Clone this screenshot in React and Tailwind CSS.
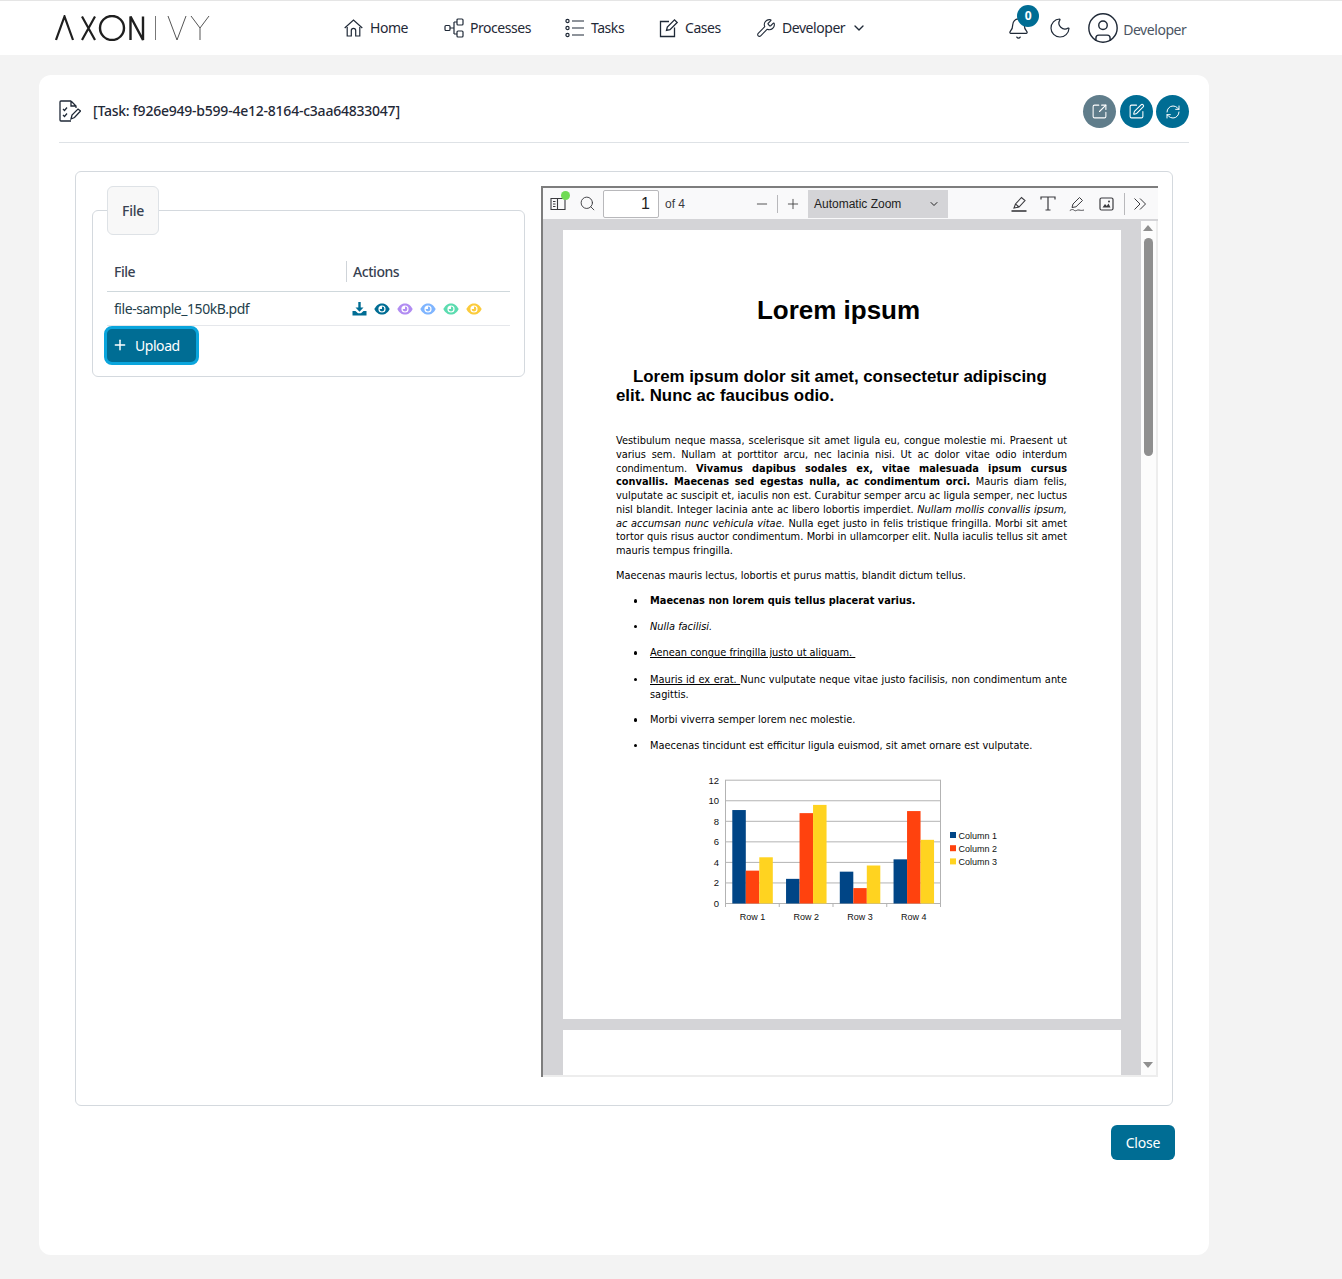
import React from "react";
import { Wrench, ChevronDown, Bell, Moon, CircleUser, SquareArrowOutUpRight, SquarePen, RefreshCw, Plus, Search, Minus } from "lucide-react";

const Logo = () => (
  <svg width="156" height="26" viewBox="0 0 156 26" className="block" fill="none" stroke="#1f1f1f">
    <path d="M1 25 L9.5 1.5 L18 25" strokeWidth="2.2" />
    <path d="M27 1.5 L40 25 M40 1.5 L27 25" strokeWidth="2.2" />
    <ellipse cx="57" cy="13" rx="12" ry="12" strokeWidth="2.4" />
    <path d="M75.5 25 V1.5 L88 25 V1.5" strokeWidth="2.4" />
    <path d="M100.5 1 V25" strokeWidth="1" stroke="#777" />
    <path d="M113 1 L122 25 L131 1" strokeWidth="1" stroke="#555" />
    <path d="M136 1 L145 13 L154 1 M145 13 V25" strokeWidth="1" stroke="#555" />
  </svg>
);

const HomeIcon = () => (
  <svg width="20" height="18" viewBox="0 0 20 18" fill="none" stroke="#1f2937" strokeWidth="1.2">
    <path d="M0.7 9 L9.5 1 L18.3 9" />
    <path d="M3.2 8 V17 H7.3 V11.5 A2.2 2.2 0 0 1 11.7 11.5 V17 H15.8 V8" />
  </svg>
);

const ProcessIcon = () => (
  <svg width="20" height="20" viewBox="0 0 20 20" fill="none" stroke="#1f2937" strokeWidth="1.2">
    <rect x="1" y="7.5" width="5" height="5" rx="1" />
    <rect x="13" y="1" width="6" height="6" rx="1" />
    <rect x="13" y="13" width="6" height="6" rx="1" />
    <path d="M6 10 H10 M10 4 V16 M10 4 H13 M10 16 H13" />
  </svg>
);

const TasksIcon = () => (
  <svg width="20" height="20" viewBox="0 0 20 20" fill="none" stroke="#1f2937" strokeWidth="1.2">
    <circle cx="2.5" cy="3" r="1.6" />
    <circle cx="2.5" cy="10" r="1.6" />
    <circle cx="2.5" cy="17" r="1.6" />
    <path d="M7 3 H19 M7 10 H19 M7 17 H19" />
  </svg>
);

const CasesIcon = () => (
  <svg width="20" height="20" viewBox="0 0 20 20" fill="none" stroke="#1f2937" strokeWidth="1.3">
    <path d="M10 3.5 H1.5 V18.5 H15.5 V9.5" />
    <path d="M7.5 12.5 L8.3 9 L15.5 1.8 L18.2 4.5 L11 11.7 Z" />
  </svg>
);

const TaskDocIcon = () => (
  <svg width="22" height="22" viewBox="0 0 22 22" fill="none" stroke="#1f2937" strokeWidth="1.3">
    <path d="M12 1 H2 a1 1 0 0 0 -1 1 V20 a1 1 0 0 0 1 1 H12 M12 1 L17 6 V8 M12 1 V6 H17" />
    <path d="M4 9 L5.5 10.5 L8 7.5 M4 15 L5.5 16.5 L8 13.5" />
    <path d="M12 19 L13 15 L19 9 L21.5 11 L15.5 17.5 Z" />
  </svg>
);

const SidebarIcon = () => (
  <svg width="16" height="14" viewBox="0 0 16 14" fill="none" stroke="#3a3a3e" strokeWidth="1.1">
    <path d="M1 1.5 H15 V12.5 H1 Z M7.5 1.5 V12.5 M3 4.5 H5.5 M3 7 H5.5 M3 9.5 H5.5" />
  </svg>
);

const HighlightIcon = () => (
  <svg width="16" height="16" viewBox="0 0 16 16" fill="none" stroke="#3a3a3e" strokeWidth="1.1">
    <path d="M3 12 L4.5 8 L10.5 1.5 L14 4.5 L8 11 Z M4.5 8 L8 11" />
    <path d="M0.5 15 H15.5" strokeWidth="1.6" />
  </svg>
);

const TextIcon = () => (
  <svg width="16" height="15" viewBox="0 0 16 15" fill="none" stroke="#3a3a3e" strokeWidth="1.2">
    <path d="M1 3.5 V1 H15 V3.5 M8 1 V14 M5.5 14 H10.5" />
  </svg>
);

const SignIcon = () => (
  <svg width="16" height="16" viewBox="0 0 16 16" fill="none" stroke="#3a3a3e" strokeWidth="1">
    <path d="M3 11.5 L4 8 L10.5 1.5 L13.5 4.5 L7 10.8 Z" />
    <path d="M0.8 14.5 C3 13 4.5 13.5 5.5 14.5 C7 15.5 8 13.5 10 14 C12 14.5 13 14.5 15 14" strokeWidth="0.9" />
  </svg>
);

const ImageIcon = () => (
  <svg width="15" height="14" viewBox="0 0 15 14" fill="none" stroke="#3a3a3e" strokeWidth="1.2">
    <rect x="1" y="1" width="13" height="12" rx="1.5" />
    <path d="M3.5 10.5 L6 7 L7.8 9 L9.5 6.5 L11.5 10.5 Z" fill="#3a3a3e" stroke="none" />
    <circle cx="10" cy="4.5" r="1" fill="#3a3a3e" stroke="none" />
  </svg>
);

const DoubleChevron = () => (
  <svg width="14" height="14" viewBox="0 0 14 14" fill="none" stroke="#3a3a3e" strokeWidth="1">
    <path d="M1.5 1.5 L7 7 L1.5 12.5 M7 1.5 L12.5 7 L7 12.5" />
  </svg>
);

const Eye = ({ color }) => (
  <svg width="16" height="12" viewBox="0 0 16 12">
    <path d="M0.3 6 C2.5 1.8 5 0.4 8 0.4 C11 0.4 13.5 1.8 15.7 6 C13.5 10.2 11 11.6 8 11.6 C5 11.6 2.5 10.2 0.3 6 Z" fill={color} />
    <circle cx="8" cy="6" r="3.6" fill="#fff" />
    <path d="M8 3.6 A2.4 2.4 0 1 1 5.6 6 L8 6 Z" fill={color} />
  </svg>
);

const DownloadIcon = () => (
  <svg width="15" height="14" viewBox="0 0 15 14" fill="#006d94">
    <path d="M6.3 0 H8.7 V5.5 H11.5 L7.5 9.8 L3.5 5.5 H6.3 Z" />
    <path d="M0.5 9 H3.5 L6 11.2 H9 L11.5 9 H14.5 V13.5 H0.5 Z" />
  </svg>
);

const NavItem = ({ icon, label, className = "" }) => (
  <div className={`flex items-center gap-[6px] text-[14px] tracking-[-0.45px] text-[#1f2937] ${className}`}>
    {icon}
    <span className="mb-[1px]">{label}</span>
  </div>
);

const CircleButton = ({ children, className = "" }) => (
  <button className={`flex h-[33px] w-[33px] items-center justify-center rounded-full text-white ${className}`}>
    {children}
  </button>
);

const FileTable = () => (
  <div className="relative ml-[16px] mt-[24px] h-[167px] w-[433px] rounded-md border border-[#d4d9de]">
    <div className="absolute left-[14px] top-[-25px] flex h-[49px] w-[52px] items-center justify-center rounded-md border border-[#dee2e6] bg-[#f8f8f8] text-[14px] font-medium tracking-[-0.3px] text-[#374151]">
      File
    </div>
    <div className="ml-[14px] mt-[40px] w-[403px] text-[14px] tracking-[-0.45px] text-[#374151]">
      <div className="flex h-[41px] items-center border-b border-[#cfd8dc] font-medium">
        <div className="w-[239px] pl-[7px]">File</div>
        <div className="flex h-[21px] items-center border-l border-[#cfd4d9] pl-[6px]">Actions</div>
      </div>
      <div className="flex h-[34px] items-center border-b border-[#e5e7eb]">
        <div className="w-[240px] pl-[7px] text-[#1f3f4c]">file-sample_150kB.pdf</div>
        <div className="flex items-center gap-[7px] pl-[5px]">
          <DownloadIcon />
          <Eye color="#006d94" />
          <Eye color="#b18cf2" />
          <Eye color="#7fb5ff" />
          <Eye color="#5cdcb0" />
          <Eye color="#fbcb3c" />
        </div>
      </div>
      <button className="ml-[-3px] flex h-[39px] w-[95px] items-center gap-[7px] rounded-lg border-[3px] border-[#0aa5dc] bg-[#006d94] pb-[1px] pl-[5px] text-white">
        <Plus size={16} strokeWidth={2.2} />
        <span>Upload</span>
      </button>
    </div>
  </div>
);

const PdfToolbar = () => (
  <div className="flex h-[33px] items-center border-b-2 border-[#d4d4d7] bg-[#f9f9fa] text-[#3a3a3e]">
    <div className="relative ml-[7px] w-[17px]">
      <SidebarIcon />
      <div className="absolute right-[-3px] top-[-6px] h-[9px] w-[9px] rounded-full bg-[#70db55]" />
    </div>
    <Search size={17} strokeWidth={1.3} className="ml-[12px]" />
    <div className="ml-[7px] flex h-[28px] w-[56px] items-center justify-end rounded-[2px] border border-[#b8b8bb] bg-white pr-[8px] text-[16px] text-[#222] [font-family:'Liberation_Sans',sans-serif]">
      1
    </div>
    <span className="ml-[6px] w-[89px] text-[12px] [font-family:'Liberation_Sans',sans-serif]">of 4</span>
    <Minus size={16} strokeWidth={1.3} />
    <div className="mx-[7px] h-[18px] w-px bg-[#b8b8bb]" />
    <Plus size={16} strokeWidth={1.3} />
    <div className="ml-[7px] flex h-[28px] w-[140px] items-center justify-between bg-[#d4d4d7] pl-[6px] pr-[8px] text-[12px] text-[#222] [font-family:'Liberation_Sans',sans-serif]">
      <span>Automatic Zoom</span>
      <ChevronDown size={12} />
    </div>
    <div className="ml-[63px] flex items-center gap-[13px]">
      <HighlightIcon />
      <TextIcon />
      <SignIcon />
      <div className="ml-[1px]"><ImageIcon /></div>
    </div>
    <div className="ml-[10px] h-[22px] w-px bg-[#b8b8bb]" />
    <div className="ml-[8px]"><DoubleChevron /></div>
  </div>
);

const chartData = [
  [9.1, 3.2, 4.5],
  [2.4, 8.8, 9.6],
  [3.1, 1.5, 3.7],
  [4.3, 9, 6.2],
];
const chartColors = ["#004586", "#ff420e", "#ffd320"];

const Chart = () => (
  <svg width="310" height="160" viewBox="0 0 310 160" className="ml-[76px] mt-[20px] block">
    {[0, 1, 2, 3, 4, 5, 6].map((i) => (
      <g key={i}>
        <line x1="33" x2="249" y1={131.5 - i * 20.55} y2={131.5 - i * 20.55} stroke="#b3b3b3" strokeWidth="1" />
        <text x="27" y={135 - i * 20.55} textAnchor="end" fontSize="9.5" fill="#111" fontFamily="Liberation Sans">{i * 2}</text>
      </g>
    ))}
    <line x1="33.5" x2="33.5" y1="8" y2="135" stroke="#b3b3b3" />
    <line x1="248.5" x2="248.5" y1="8" y2="135" stroke="#b3b3b3" />
    {chartData.map((row, r) => (
      <g key={r}>
        {row.map((v, c) => (
          <rect key={c} x={40.3 + r * 53.75 + c * 13.5} y={131.5 - v * 10.27} width="13.5" height={v * 10.27} fill={chartColors[c]} />
        ))}
        <line x1={33.5 + r * 53.75} x2={33.5 + r * 53.75} y1="131" y2="135" stroke="#b3b3b3" />
        <text x={60.5 + r * 53.75} y="148" textAnchor="middle" fontSize="9" fill="#111" fontFamily="Liberation Sans">Row {r + 1}</text>
      </g>
    ))}
    {chartColors.map((color, i) => (
      <g key={color}>
        <rect x="258" y={60 + i * 13.2} width="6" height="6" fill={color} />
        <text x="266.5" y={66.5 + i * 13.2} fontSize="9" fill="#111" fontFamily="Liberation Sans">Column {i + 1}</text>
      </g>
    ))}
  </svg>
);

const paragraph = [
  <>Vestibulum neque massa, scelerisque sit amet ligula eu, congue molestie mi. Praesent ut</>,
  <>varius sem. Nullam at porttitor arcu, nec lacinia nisi. Ut ac dolor vitae odio interdum</>,
  <>condimentum. <b>Vivamus dapibus sodales ex, vitae malesuada ipsum cursus</b></>,
  <><b>convallis. Maecenas sed egestas nulla, ac condimentum orci.</b> Mauris diam felis,</>,
  <>vulputate ac suscipit et, iaculis non est. Curabitur semper arcu ac ligula semper, nec luctus</>,
  <>nisl blandit. Integer lacinia ante ac libero lobortis imperdiet. <i>Nullam mollis convallis ipsum,</i></>,
  <><i>ac accumsan nunc vehicula vitae.</i> Nulla eget justo in felis tristique fringilla. Morbi sit amet</>,
  <>tortor quis risus auctor condimentum. Morbi in ullamcorper elit. Nulla iaculis tellus sit amet</>,
];

const Bullet = ({ children, className = "" }) => (
  <li className={`relative pl-[34px] ${className}`}>
    <span className="absolute left-[17.5px] top-[5px] h-[3.5px] w-[3.5px] rounded-full bg-black" />
    {children}
  </li>
);

const PdfPage = () => (
  <div className="h-[789px] w-[558px] shrink-0 bg-white px-[53.5px] pt-[64px] text-[9.82px] leading-[13.75px] text-black [font-family:'DejaVu_Sans',sans-serif]">
    <h1 className="pr-[6px] text-center text-[26px] font-bold leading-[32px] [font-family:'Liberation_Sans',sans-serif]">Lorem ipsum</h1>
    <h2 className="mt-[41px] text-[16.85px] font-bold leading-[19px] [font-family:'Liberation_Sans',sans-serif]">
      <span className="block pl-[17px]">Lorem ipsum dolor sit amet, consectetur adipiscing</span>
      <span className="block">elit. Nunc ac faucibus odio.</span>
    </h2>
    <div className="mt-[29px] w-[451px]">
      {paragraph.map((line, i) => (
        <div key={i} className="whitespace-nowrap text-justify [text-align-last:justify]">{line}</div>
      ))}
      <div>mauris tempus fringilla.</div>
    </div>
    <p className="mt-[11px]">Maecenas mauris lectus, lobortis et purus mattis, blandit dictum tellus.</p>
    <ul className="mt-[11.5px] w-[451px]">
      <Bullet><b>Maecenas non lorem quis tellus placerat varius.</b></Bullet>
      <Bullet className="mt-[12px]"><i>Nulla facilisi.</i></Bullet>
      <Bullet className="mt-[12.5px]"><u>Aenean congue fringilla justo ut aliquam.&nbsp;</u></Bullet>
      <Bullet className="mt-[13px]">
        <div className="whitespace-nowrap [text-align-last:justify]"><u>Mauris id ex erat. </u>Nunc vulputate neque vitae justo facilisis, non condimentum ante</div>
        <div className="mt-[1px]">sagittis.</div>
      </Bullet>
      <Bullet className="mt-[12px]">Morbi viverra semper lorem nec molestie.</Bullet>
      <Bullet className="mt-[11.5px]">Maecenas tincidunt est efficitur ligula euismod, sit amet ornare est vulputate.</Bullet>
    </ul>
    <Chart />
  </div>
);

const PdfViewer = () => (
  <div className="flex h-[891px] w-[617px] flex-col overflow-hidden border-l-2 border-t-2 border-[#7d7d7d]">
    <PdfToolbar />
    <div className="flex min-h-0 flex-1">
      <div className="flex w-[598px] flex-col items-center gap-[11px] overflow-hidden bg-[#d4d4d7] pt-[9px] pr-[1px]">
        <PdfPage />
        <div className="h-[60px] w-[558px] shrink-0 bg-white" />
      </div>
      <div className="relative flex-1 border-r-2 border-[#ededed] bg-[#fcfcfc]">
        <div className="absolute left-[2px] top-[4px] h-0 w-0 border-x-[5px] border-b-[6px] border-x-transparent border-b-[#8f8f8f]" />
        <div className="absolute left-[3px] top-[17px] h-[218px] w-[9px] rounded-full bg-[#8f8f8f]" />
        <div className="absolute bottom-[7px] left-[2px] h-0 w-0 border-x-[5px] border-t-[6px] border-x-transparent border-t-[#8f8f8f]" />
      </div>
    </div>
    <div className="h-[2px] bg-[#ededed]" />
  </div>
);

export default function App() {
  return (
    <div className="min-h-[1279px] bg-[#f3f3f3] [font-family:'Noto_Sans',sans-serif]">
      <header className="flex h-[55px] items-center border-t border-[#e5e5e5] bg-white">
        <div className="ml-[55px] w-[289px]"><Logo /></div>
        <NavItem className="w-[100px]" icon={<HomeIcon />} label="Home" />
        <NavItem className="w-[121px]" icon={<ProcessIcon />} label="Processes" />
        <NavItem className="w-[94px]" icon={<TasksIcon />} label="Tasks" />
        <NavItem className="w-[97px]" icon={<CasesIcon />} label="Cases" />
        <NavItem icon={<Wrench size={20} strokeWidth={1.3} className="text-[#1f2937]" />} label="Developer" />
        <ChevronDown size={16} className="ml-[6px] text-[#1f2937]" />
        <div className="relative ml-[140px]">
          <Bell size={23} strokeWidth={1.3} className="text-[#1f2937]" />
          <span className="absolute left-[10px] top-[-12px] flex h-[22px] w-[22px] items-center justify-center rounded-full bg-[#006d94] text-[12px] font-bold text-white">0</span>
        </div>
        <Moon size={24} strokeWidth={1.2} className="ml-[18px] text-[#1f2937]" />
        <CircleUser size={34} strokeWidth={1} className="ml-[14px] text-[#1f2937]" />
        <span className="ml-[3px] mt-[3px] text-[14px] tracking-[-0.45px] text-[#4b5563]">Developer</span>
      </header>

      <main className="ml-[39px] mt-[20px] h-[1180px] w-[1170px] rounded-xl bg-white px-[20px] pt-[20px]">
        <div className="flex h-[48px] items-start justify-between border-b border-[#dee2e6]">
          <div className="flex h-[32px] items-center gap-[12px]">
            <TaskDocIcon />
            <span className="mb-[2px] text-[14px] font-medium tracking-[-0.23px] text-[#1f2937]">[Task: f926e949-b599-4e12-8164-c3aa64833047]</span>
          </div>
          <div className="flex">
            <CircleButton className="mr-[4px] bg-[#607d8b]"><SquareArrowOutUpRight size={17} strokeWidth={1.5} /></CircleButton>
            <CircleButton className="mr-[3px] bg-[#006d94]"><SquarePen size={17} strokeWidth={1.5} /></CircleButton>
            <CircleButton className="bg-[#006d94]"><RefreshCw size={16} strokeWidth={1.5} /></CircleButton>
          </div>
        </div>

        <div className="ml-[16px] mt-[28px] flex h-[935px] w-[1098px] rounded-md border border-[#d4d9de] pt-[14px]">
          <div className="w-[465px]"><FileTable /></div>
          <PdfViewer />
        </div>

        <div className="ml-[1052px] mt-[19px]">
          <button className="h-[35px] w-[64px] rounded-md bg-[#006d94] text-[14px] tracking-[-0.2px] text-white">Close</button>
        </div>
      </main>
    </div>
  );
}
